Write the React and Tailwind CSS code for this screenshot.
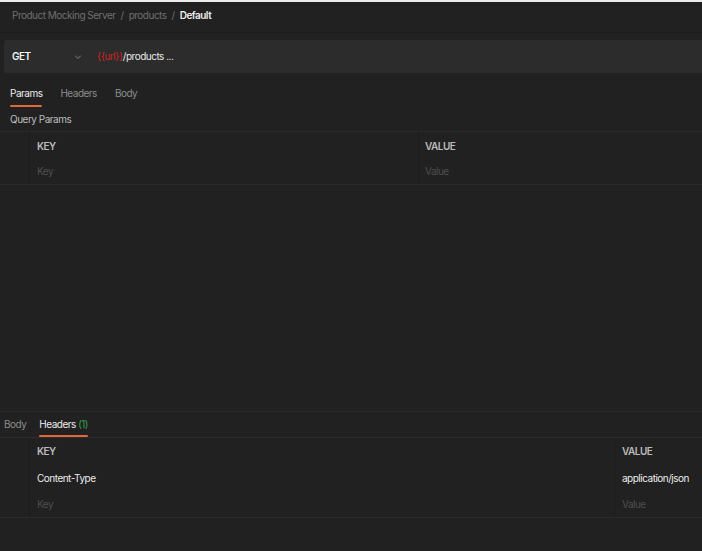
import React from "react";

const F = { fontFamily: "Inter, 'Noto Sans', sans-serif" };

function Chevron() {
  return (
    <svg width="8" height="8" viewBox="0 0 8 8" fill="none">
      <path d="M1.5 3 L4 5.5 L6.5 3" stroke="#8a8a8a" strokeWidth="0.9" strokeLinecap="round" strokeLinejoin="round" />
    </svg>
  );
}

export default function App() {
  return (
    <div className="w-[702px] h-[551px] bg-[#212121] border-t-2 border-[#ececec] flex flex-col overflow-hidden text-[10px] tracking-[-0.5px]" style={F}>
      {/* breadcrumb */}
      <div className="h-[31px] shrink-0 flex items-center pb-[4px] pl-3 gap-[5px] border-b border-[#1b1b1b] text-[#6f6f6f]">
        <span>Product Mocking Server</span>
        <span>/</span>
        <span>products</span>
        <span>/</span>
        <span className="text-[#ececec] font-semibold">Default</span>
      </div>
      {/* url bar */}
      <div className="pt-[7px] pl-1 shrink-0">
        <div className="h-[33px] bg-[#2c2c2c] rounded-l-[3px] flex items-center">
          <span className="pl-2 w-[70px] text-[#f2f2f2] font-semibold">GET</span>
          <Chevron />
          <span className="ml-[15px] text-[#cc2424]">{"{{url}}"}</span>
          <span className="text-[#e8e8e8]">/products ...</span>
        </div>
      </div>
      {/* tabs */}
      <div className="h-[34px] shrink-0 flex items-end pl-[10px] gap-[18px]">
        <div className="flex flex-col">
          <span className="text-[#ececec] leading-[12px]">Params</span>
          <div className="mt-[6px] h-[2px] bg-[#e0693c] rounded-full" />
        </div>
        <div className="flex flex-col">
          <span className="text-[#8c8c8c] leading-[12px]">Headers</span>
          <div className="mt-[6px] h-[2px]" />
        </div>
        <div className="flex flex-col">
          <span className="text-[#8c8c8c] leading-[12px]">Body</span>
          <div className="mt-[6px] h-[2px]" />
        </div>
      </div>
      <div className="h-[25px] shrink-0 flex items-center pl-[10px] text-[#bdbdbd] border-b border-[#2a2a2a]">
        Query Params
      </div>
      {/* params table */}
      <div className="shrink-0 flex border-b border-[#2a2a2a]">
        <div className="w-[30px] border-r border-[#1c1c1c]" />
        <div className="flex-1 flex flex-col">
          <div className="h-[27px] flex items-center pl-[7px] pt-[1px] text-[#bcbcbc] font-semibold">KEY</div>
          <div className="h-[25px] flex items-center pl-[7px] text-[#4e4e4e]">Key</div>
        </div>
        <div className="w-[284px] border-l border-[#1c1c1c] flex flex-col">
          <div className="h-[27px] flex items-center pl-[6px] pt-[1px] text-[#bcbcbc] font-semibold">VALUE</div>
          <div className="h-[25px] flex items-center pl-[6px] text-[#4e4e4e]">Value</div>
        </div>
      </div>
      <div className="flex-1" />
      {/* response */}
      <div className="h-[27px] shrink-0 border-t border-[#2c2c2c] flex items-end pl-1 gap-[13px] border-b border-[#2c2c2c]">
        <div className="flex flex-col">
          <span className="text-[#8c8c8c] leading-[12px]">Body</span>
          <div className="mt-[5px] h-[2px]" />
        </div>
        <div className="flex flex-col">
          <span className="text-[#ececec] leading-[12px]">
            Headers <span className="text-[#2ea44f]">(1)</span>
          </span>
          <div className="mt-[5px] h-[2px] bg-[#e0693c] rounded-full" />
        </div>
      </div>
      <div className="shrink-0 flex border-b border-[#2a2a2a]">
        <div className="w-[30px] border-r border-[#1c1c1c]" />
        <div className="flex-1 flex flex-col">
          <div className="h-[27px] flex items-center pl-[7px] text-[#bcbcbc] font-semibold">KEY</div>
          <div className="h-[26px] flex items-center pl-[7px] text-[#ececec]">Content-Type</div>
          <div className="h-[26px] flex items-center pl-[7px] text-[#4e4e4e]">Key</div>
        </div>
        <div className="w-[88px] border-l border-[#1c1c1c] flex flex-col">
          <div className="h-[27px] flex items-center pl-[7px] text-[#bcbcbc] font-semibold">VALUE</div>
          <div className="h-[26px] flex items-center pl-[7px] text-[#ececec] whitespace-nowrap">application/json</div>
          <div className="h-[26px] flex items-center pl-[7px] text-[#4e4e4e]">Value</div>
        </div>
      </div>
      <div className="h-[33px] shrink-0" />
    </div>
  );
}
